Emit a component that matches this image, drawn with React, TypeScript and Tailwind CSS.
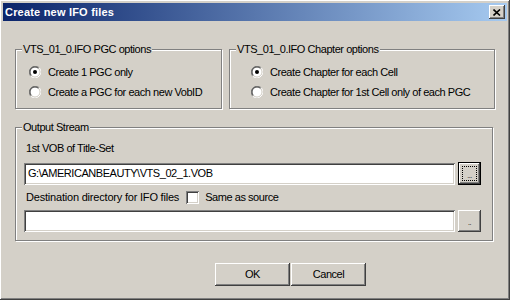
import React from "react";

const raised =
  "shadow-[inset_-1px_-1px_#404040,inset_1px_1px_#ffffff,inset_-2px_-2px_#808080,inset_2px_2px_#d4d0c8]";
const sunken =
  "shadow-[inset_1px_1px_#808080,inset_-1px_-1px_#ffffff,inset_2px_2px_#404040,inset_-2px_-2px_#d4d0c8]";
const etched =
  "border border-[#808080] shadow-[inset_1px_1px_#ffffff,1px_1px_#ffffff]";

function Radio({ checked }: { checked?: boolean }) {
  return (
    <svg width="12" height="12" viewBox="0 0 12 12" className="shrink-0">
      <circle cx="6" cy="6" r="5" fill="#ffffff" />
      <path d="M10.24 1.76A6 6 0 0 0 1.76 10.24" fill="none" stroke="#808080" strokeWidth="1" />
      <path d="M1.76 10.24A6 6 0 0 0 10.24 1.76" fill="none" stroke="#ffffff" strokeWidth="1" />
      <path d="M9.54 2.46A5 5 0 0 0 2.46 9.54" fill="none" stroke="#404040" strokeWidth="1" />
      <path d="M2.46 9.54A5 5 0 0 0 9.54 2.46" fill="none" stroke="#d4d0c8" strokeWidth="1" />
      {checked && <circle cx="6" cy="6" r="2" fill="#000000" />}
    </svg>
  );
}

function Group({
  title,
  className,
  children,
}: {
  title: string;
  className?: string;
  children: React.ReactNode;
}) {
  return (
    <div className={`relative ${etched} ${className ?? ""}`}>
      <span className="absolute -top-[8px] left-[6px] bg-[#d4d0c8] px-[1px] leading-[14px]">
        {title}
      </span>
      {children}
    </div>
  );
}

export default function App() {
  return (
    <div
      className={`w-[510px] h-[300px] bg-[#d4d0c8] p-[3px] flex flex-col text-[11px] text-black ${raised}`}
      style={{ fontFamily: '"Liberation Sans", Arial, sans-serif' }}
    >
      {/* title bar */}
      <div className="h-[18px] flex items-center justify-between pl-[2px] pr-[2px] bg-[linear-gradient(to_right,#0a246a,#a6caf0)]">
        <span className="text-white font-bold text-[11px] leading-none tracking-[0.2px]">Create new IFO files</span>
        <div className={`w-[16px] h-[14px] bg-[#d4d0c8] flex items-center justify-center ${raised}`}>
          <svg width="8" height="7" viewBox="0 0 8 7">
            <path d="M0.5 0.5L7 6.5M7 0.5L0.5 6.5" stroke="#000" strokeWidth="1.6" />
          </svg>
        </div>
      </div>

      <div className="flex flex-col pl-[12px] pt-[28px] tracking-[-0.45px]">
        <div className="flex gap-[7px] w-[480px]">
          <Group title="VTS_01_0.IFO PGC options" className="w-[207px] h-[60px] pl-[13px] pt-[12px]">
            <div className="flex items-center gap-[7px] h-[20px]">
              <Radio checked />
              <span>Create 1 PGC only</span>
            </div>
            <div className="flex items-center gap-[7px] h-[20px]">
              <Radio />
              <span>Create a PGC for each new VobID</span>
            </div>
          </Group>
          <Group title="VTS_01_0.IFO Chapter options" className="flex-1 h-[60px] pl-[21px] pt-[12px]">
            <div className="flex items-center gap-[7px] h-[20px]">
              <Radio checked />
              <span>Create Chapter for each Cell</span>
            </div>
            <div className="flex items-center gap-[7px] h-[20px]">
              <Radio />
              <span>Create Chapter for 1st Cell only of each PGC</span>
            </div>
          </Group>
        </div>

        <Group title="Output Stream" className="mt-[18px] w-[478px] h-[114px] pl-[8px] pt-[13px]">
          <div className="leading-[14px] pl-[2px]">1st VOB of Title-Set</div>
          <div className="flex items-center gap-[3px] mt-[7px]">
            <div className={`w-[431px] h-[22px] bg-white flex items-center pl-[4px] ${sunken}`}>
              G:\AMERICANBEAUTY\VTS_02_1.VOB
            </div>
            <div className="w-[23px] h-[23px] border border-black">
              <div className={`w-full h-full bg-[#d4d0c8] p-[3px] ${raised}`}>
                <div className="w-full h-full border border-dotted border-black flex items-end justify-center text-[7px] leading-[8px]">
                  ...
                </div>
              </div>
            </div>
          </div>
          <div className="flex items-center mt-[5px] h-[14px] pl-[2px]">
            <span className="tracking-[-0.2px]">Destination directory for IFO files</span>
            <div className={`ml-[7px] w-[13px] h-[13px] bg-white ${sunken}`} />
            <span className="ml-[6px]">Same as source</span>
          </div>
          <div className="flex items-center gap-[3px] mt-[6px]">
            <div className={`w-[431px] h-[22px] bg-white ${sunken}`} />
            <div className={`w-[23px] h-[22px] bg-[#d4d0c8] flex items-end justify-center pb-[5px] text-[7px] leading-[8px] ${raised}`}>
              ..
            </div>
          </div>
        </Group>

        <div className="flex gap-[1px] mt-[22px] ml-[200px]">
          <div className={`w-[75px] h-[23px] flex items-center justify-center ${raised}`}>OK</div>
          <div className={`w-[75px] h-[23px] flex items-center justify-center ${raised}`}>Cancel</div>
        </div>
      </div>
    </div>
  );
}
